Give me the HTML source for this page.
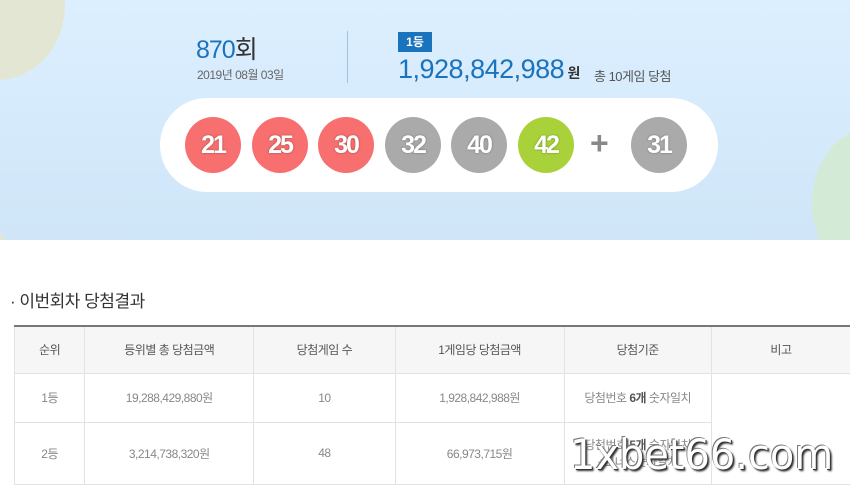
<!DOCTYPE html>
<html><head><meta charset="utf-8"><style>
*{margin:0;padding:0;box-sizing:border-box}
body{width:850px;height:478px;overflow:hidden;background:#fff;font-family:"Liberation Sans","Noto Sans CJK KR",sans-serif;position:relative}
.top{position:absolute;left:0;top:0;width:850px;height:240px;background:linear-gradient(#dcefff,#cfe6f8);overflow:hidden}
.c1{position:absolute;left:-70px;top:-70px;width:135px;height:150px;border-radius:50%;background:#e3e6d2}
.c2{position:absolute;left:812px;top:128px;width:120px;height:150px;border-radius:50%;background:#d2ead6}
.c3{position:absolute;left:-40px;top:225px;width:45px;height:40px;border-radius:50%;background:#e3e6d2}
.t{position:absolute;white-space:nowrap}
.pill{position:absolute;left:160px;top:98px;width:558px;height:94px;border-radius:47px;background:#fff}
.b{position:absolute;top:117px;width:56px;height:56px;border-radius:50%;color:#fff;font-size:25px;font-weight:bold;text-align:center;line-height:56px;text-shadow:0 0 2px rgba(0,0,0,.35);letter-spacing:-2px}
.r{background:#f76f6f}.g{background:#aaa}.y{background:#a9d23a}
table{position:absolute;left:14px;top:325px;border-collapse:collapse;border-top:2px solid #777;font-size:12px;color:#888;letter-spacing:-0.5px}
td{border:1px solid #e2e2e2;text-align:center;height:49px}
tr.h td{background:#f6f6f6;height:47px;color:#555}
</style></head><body>
<div class="top"><div class="c1"></div><div class="c2"></div><div class="c3"></div></div>
<div class="t" style="left:196px;top:30px;font-size:25px;color:#1a73bd;letter-spacing:-1px">870<span style="color:#333">회</span></div>
<div class="t" style="left:197px;top:66px;font-size:12px;color:#666;letter-spacing:-0.5px">2019년 08월 03일</div>
<div style="position:absolute;left:347px;top:31px;width:1px;height:52px;background:#9fc3de"></div>
<div class="t" style="left:398px;top:32px;width:34px;height:20px;background:#1a73bd;color:#fff;font-size:12px;font-weight:bold;text-align:center;line-height:20px">1등</div>
<div class="t" style="left:398px;top:54px;font-size:27px;color:#1a73bd;letter-spacing:-0.5px">1,928,842,988<span style="font-size:14px;color:#333;font-weight:bold"> 원</span></div>
<div class="t" style="left:594px;top:66px;font-size:13px;color:#555;letter-spacing:-0.5px">총 10게임 당첨</div>
<div class="pill"></div>
<div class="b r" style="left:185px">21</div>
<div class="b r" style="left:252px">25</div>
<div class="b r" style="left:318px">30</div>
<div class="b g" style="left:385px">32</div>
<div class="b g" style="left:451px">40</div>
<div class="b y" style="left:518px">42</div>
<div class="t" style="left:590px;top:125px;font-size:32px;color:#888;font-weight:bold">+</div>
<div class="b g" style="left:631px">31</div>
<div class="t" style="left:10px;top:287px;font-size:17px;color:#333;letter-spacing:-0.5px">· 이번회차 당첨결과</div>
<table>
<tr class="h"><td style="width:71px">순위</td><td style="width:170px">등위별 총 당첨금액</td><td style="width:143px">당첨게임 수</td><td style="width:170px">1게임당 당첨금액</td><td style="width:149px">당첨기준</td><td style="width:140px;border-right:none">비고</td></tr>
<tr><td>1등</td><td>19,288,429,880원</td><td>10</td><td>1,928,842,988원</td><td>당첨번호 <b style="color:#555">6개</b> 숫자일치</td><td rowspan="2" style="border-right:none"></td></tr>
<tr><td style="height:62px">2등</td><td>3,214,738,320원</td><td>48</td><td>66,973,715원</td><td>당첨번호 <b style="color:#555">5개</b> 숫자일치<br>+보너스숫자일치</td></tr>
</table>
<div class="t" style="left:570px;top:430px;font-size:42px;color:#fff;font-family:'DejaVu Sans',sans-serif;transform:scaleX(0.95);transform-origin:left top;text-shadow:1px 1px 0 #333,-1px -1px 0 #777,2px 2px 2px #333">1xbet66.com</div>
</body></html>
